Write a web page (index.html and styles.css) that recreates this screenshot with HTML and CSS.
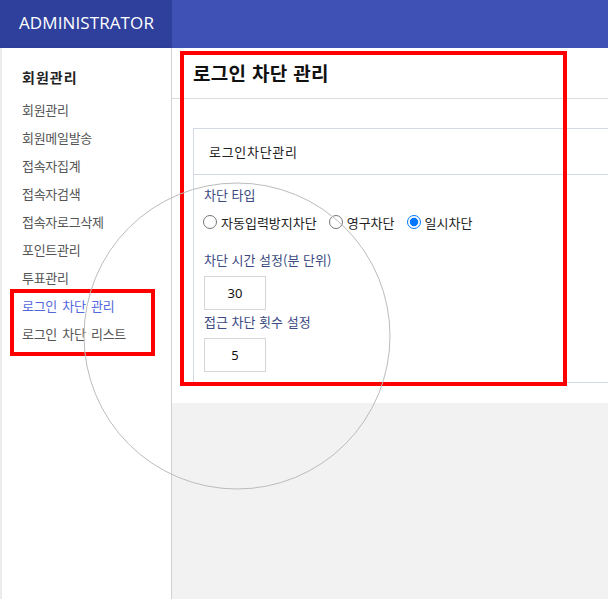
FILE: index.html
```html
<!DOCTYPE html>
<html lang="ko">
<head>
<meta charset="utf-8">
<title>ADMINISTRATOR</title>
<link rel="stylesheet" href="styles.css">
</head>
<body>
<header class="topbar">
  <div class="brand">ADMINISTRATOR</div>
  <div class="topbar-fill"></div>
</header>
<div class="layout">
  <nav class="sidebar">
    <div class="side-title">회원관리</div>
    <ul class="side-menu">
      <li>회원관리</li>
      <li>회원메일발송</li>
      <li>접속자집계</li>
      <li>접속자검색</li>
      <li>접속자로그삭제</li>
      <li>포인트관리</li>
      <li>투표관리</li>
      <li class="active">로그인 차단 관리</li>
      <li>로그인 차단 리스트</li>
    </ul>
  </nav>
  <main class="main">
    <section class="content">
      <h1 class="page-title">로그인 차단 관리</h1>
      <div class="content-body">
        <div class="card">
          <div class="card-head">로그인차단관리</div>
          <div class="card-body">
            <div class="field-label">차단 타입</div>
            <div class="radio-row">
              <label class="radio"><input type="radio" name="t"><span>자동입력방지차단</span></label>
              <label class="radio"><input type="radio" name="t"><span>영구차단</span></label>
              <label class="radio"><input type="radio" name="t" checked><span>일시차단</span></label>
            </div>
            <div class="field-label gap-lg">차단 시간 설정(분 단위)</div>
            <input class="num-input" type="text" value="30">
            <div class="field-label gap-sm">접근 차단 횟수 설정</div>
            <input class="num-input" type="text" value="5">
          </div>
        </div>
      </div>
    </section>
    <div class="filler"></div>
  </main>
</div>
<div class="mark mark-main"></div>
<div class="mark mark-side"></div>
<svg class="lens" width="608" height="599" viewBox="0 0 608 599"><circle cx="237" cy="336" r="153" fill="none" stroke="#bcbcbc" stroke-width="1"/></svg>
</body>
</html>
```

FILE: styles.css
```css
* { box-sizing: border-box; }
html, body { margin: 0; padding: 0; }
body {
  width: 608px;
  height: 599px;
  overflow: hidden;
  font-family: "Noto Sans", "Noto Sans CJK KR", sans-serif;
  color: #222;
  background: #fff;
  position: relative;
}
.topbar { display: flex; height: 48px; }
.brand {
  width: 172px;
  background: #2f3f9c;
  color: #fff;
  font-family: "Open Sans", "Noto Sans", sans-serif;
  font-size: 17px;
  line-height: 46px;
  padding-left: 19px;
  letter-spacing: 0.1px;
}
.topbar-fill { flex: 1; background: #3f51b5; }
.layout { display: flex; height: 551px; }
.sidebar {
  width: 172px;
  flex: none;
  border-left: 2px solid #ececec;
  border-right: 1px solid #d2d2d2;
  box-shadow: 1px 0 2px rgba(0,0,0,0.08);
  padding-left: 20px;
  padding-top: 15px;
  background: #fff;
}
.side-title {
  font-family: "Noto Sans CJK KR", sans-serif;
  font-size: 14px;
  font-weight: bold;
  line-height: 28px;
  color: #222;
  letter-spacing: 1px;
}
.side-menu { list-style: none; margin: 5px 0 0; padding: 0; }
.side-menu li {
  font-family: "Noto Sans CJK KR", sans-serif;
  font-size: 13px;
  line-height: 28px;
  color: #555;
  letter-spacing: -0.3px;
  word-spacing: 2px;
}
.side-menu li.active { color: #5468dc; }
.main { flex: 1; display: flex; flex-direction: column; overflow: hidden; }
.content { background: #fff; padding-bottom: 20px; }
.page-title {
  margin: 0;
  height: 51px;
  line-height: 50px;
  font-family: "Noto Sans CJK KR", sans-serif;
  font-size: 19px;
  font-weight: bold;
  color: #111;
  padding-left: 21px;
  border-bottom: 1px solid #dcdcdc;
  letter-spacing: 0.3px;
}
.content-body { padding: 29px 0 0 21px; }
.card {
  border: 1px solid #d3dae6;
  border-right: none;
  margin-right: -20px;
}
.card-head {
  height: 46px;
  line-height: 45px;
  padding-left: 15px;
  font-family: "Noto Sans CJK KR", sans-serif;
  font-size: 13px;
  color: #222;
  border-bottom: 1px solid #d3dae6;
  letter-spacing: 0.7px;
}
.card-body { padding: 10px 0 10px 10px; display: flex; flex-direction: column; align-items: flex-start; }
.field-label {
  font-family: "Noto Sans CJK KR", sans-serif;
  font-size: 13px;
  line-height: 20px;
  color: #3b4a82;
  letter-spacing: 0;
}
.gap-lg { margin-top: 16px; }
.gap-sm { margin-top: 2px; }
.radio-row { display: flex; align-items: center; height: 24px; margin-top: 5px; gap: 13px; }
.radio { display: flex; align-items: center; gap: 4px; font-family: "Noto Sans CJK KR", sans-serif; font-size: 13px; color: #222; letter-spacing: 0; }
.radio input { margin: 0 0 0 -1px; width: 14px; height: 14px; accent-color: #0075ff; }
.num-input {
  margin-top: 6px;
  width: 62px;
  height: 34px;
  border: 1px solid #d6d6d6;
  text-align: center;
  font-family: "Noto Sans", sans-serif;
  font-size: 13px;
  color: #111;
  padding: 0;
  outline: none;
}
.filler { flex: 1; background: #f2f2f2; }
.mark { position: absolute; border: 4px solid #ff0000; pointer-events: none; }
.mark-main { left: 180px; top: 51px; width: 387px; height: 335px; }
.mark-side { left: 10px; top: 289px; width: 145px; height: 67px; }
.lens { position: absolute; left: 0; top: 0; pointer-events: none; }
```
